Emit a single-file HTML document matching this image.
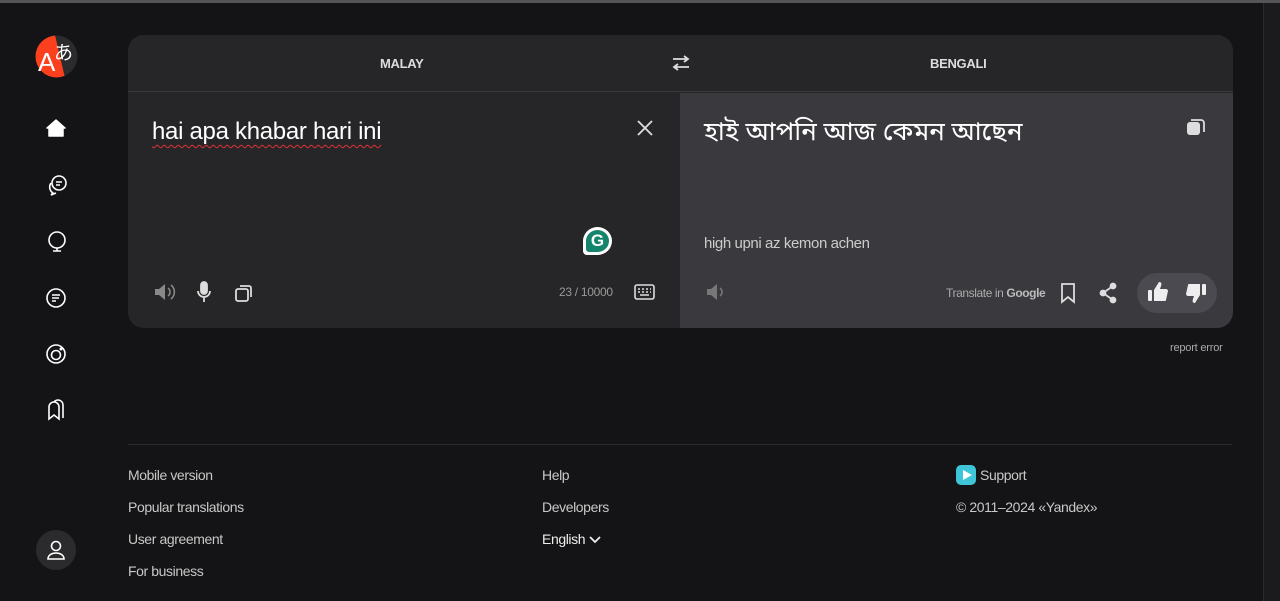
<!DOCTYPE html>
<html><head><meta charset="utf-8"><style>
*{margin:0;padding:0;box-sizing:border-box}
body{width:1280px;height:601px;background:#141416;font-family:"Liberation Sans","Noto Sans Bengali","Noto Sans CJK JP",sans-serif;color:#e6e6e6;position:relative;overflow:hidden}
.topline{position:absolute;left:0;top:0;width:1280px;height:3px;background:#555}
.scroll{position:absolute;right:0;top:3px;width:17px;height:598px;background:#1b1b1d;border-left:1px solid #2a2a2a}
.a{position:absolute}
.card{left:128px;top:35px;width:1105px;height:293px;border-radius:16px;background:#262628;overflow:hidden}
.hdr{left:0;top:0;width:1105px;height:57px;border-bottom:1px solid #3a3a3d;background:#262628}
.lp{left:0;top:58px;width:552px;height:235px;background:#262628}
.rp{left:552px;top:58px;width:553px;height:235px;background:#39393e}
.lang{font-size:13px;font-weight:bold;color:#ddd;top:21px;letter-spacing:-0.3px}
.foot{font-size:14px;color:#c8c8c8;letter-spacing:-0.4px}
</style></head><body>
<div class="topline"></div>
<div class="scroll"></div>
<svg class="a" style="left:35px;top:35px" width="43" height="43" viewBox="0 0 43 43">
<defs><clipPath id="c"><circle cx="21.5" cy="21.5" r="21"/></clipPath></defs>
<g clip-path="url(#c)"><rect width="43" height="43" fill="#2b2b2d"/><polygon points="0,0 20,0 30,43 0,43" fill="#fc3f1d"/></g>
<text x="3" y="36" font-size="26" fill="#fff" font-family="Liberation Sans">A</text>
<text x="19" y="24" font-size="19" fill="#fff" font-family="Noto Sans CJK JP">あ</text>
</svg>
<svg class="a" style="left:46px;top:118px" width="20" height="20" viewBox="0 0 20 20"><path d="M10 2 L19 10 L17 10 L17 18 L3 18 L3 10 L1 10Z" fill="#fff" stroke="#fff" stroke-linejoin="round" stroke-width="1.5"/></svg>
<svg class="a" style="left:45px;top:173px" width="24" height="24" viewBox="0 0 24 24" fill="none" stroke="#fff" stroke-width="1.6"><circle cx="14" cy="10" r="7"/><path d="M11 9h6M11 12h4"/><path d="M6 10a7 7 0 0 0 2 10l-2 2 5-2"/></svg>
<svg class="a" style="left:46px;top:230px" width="22" height="24" viewBox="0 0 22 24" fill="none" stroke="#fff" stroke-width="1.6"><circle cx="11" cy="10" r="8"/><path d="M11 18v3M7 21h8"/></svg>
<svg class="a" style="left:45px;top:287px" width="22" height="22" viewBox="0 0 22 22" fill="none" stroke="#fff" stroke-width="1.6"><rect x="2" y="2" width="18" height="18" rx="9"/><path d="M7 8h8M7 11h7M7 14h4"/></svg>
<svg class="a" style="left:45px;top:343px" width="22" height="22" viewBox="0 0 22 22" fill="none" stroke="#fff" stroke-width="1.6"><rect x="2" y="2" width="18" height="18" rx="9"/><circle cx="11" cy="12" r="4.5"/><circle cx="16" cy="6" r=".7" fill="#fff"/></svg>
<svg class="a" style="left:46px;top:399px" width="20" height="22" viewBox="0 0 20 22" fill="none" stroke="#fff" stroke-width="1.6"><path d="M3 20V8a5 5 0 0 1 10 0v12l-5-4z"/><path d="M8 3a5 5 0 0 1 9 3v13"/></svg>
<div class="a" style="left:36px;top:530px;width:40px;height:40px;border-radius:50%;background:#2b2b2e"></div>
<svg class="a" style="left:46px;top:539px" width="20" height="22" viewBox="0 0 20 22" fill="none" stroke="#fff" stroke-width="1.6"><circle cx="10" cy="7" r="4.5"/><path d="M2 20c0-4 4-6 8-6s8 2 8 6z"/></svg>

<div class="a card">
 <div class="a hdr"></div>
 <div class="a lang" style="left:252px">MALAY</div>
 <svg class="a" style="left:543px;top:20px" width="20" height="16" viewBox="0 0 20 16" fill="none" stroke="#ddd" stroke-width="1.8"><path d="M2 4h15M13 1l4 3-4 3M18 12H3M7 9l-4 3 4 3"/></svg>
 <div class="a lang" style="left:802px">BENGALI</div>
 <div class="a lp"></div>
 <div class="a rp"></div>
 <div class="a" style="left:24px;top:83px;font-size:24px;color:#fff;letter-spacing:-0.3px;text-decoration:underline wavy #d33;text-decoration-thickness:1px;text-underline-offset:5px">hai apa khabar hari ini</div>
 <svg class="a" style="left:508px;top:84px" width="18" height="18" viewBox="0 0 18 18" stroke="#ddd" stroke-width="1.8"><path d="M2 2l14 14M16 2L2 16"/></svg>
 <div class="a" style="left:455px;top:192px;width:29px;height:28px;border-radius:50% 50% 50% 4px;background:#fff"></div>
 <div class="a" style="left:458px;top:195px;width:23px;height:22px;border-radius:50% 50% 50% 3px;background:#15846c;color:#fff;font-size:17px;font-weight:bold;text-align:center;line-height:22px">G</div>
 <svg class="a" style="left:26px;top:247px" width="22" height="20" viewBox="0 0 22 20" fill="#888"><path d="M1 7h4l6-5v16l-6-5H1z"/><path d="M14 6a5 5 0 0 1 0 8M17 3a9 9 0 0 1 0 14" stroke="#888" stroke-width="1.6" fill="none"/></svg>
 <svg class="a" style="left:68px;top:246px" width="16" height="22" viewBox="0 0 16 22" fill="none" stroke="#ddd" stroke-width="1.8"><rect x="5" y="1" width="6" height="12" rx="3" fill="#ddd"/><path d="M2 10a6 6 0 0 0 12 0M8 16v5"/></svg>
 <svg class="a" style="left:106px;top:248px" width="20" height="20" viewBox="0 0 20 20" fill="none" stroke="#ddd" stroke-width="1.8"><rect x="2" y="6" width="12" height="12" rx="2"/><path d="M6 3h9a2 2 0 0 1 2 2v9"/></svg>
 <div class="a" style="left:431px;top:250px;font-size:12px;color:#999;letter-spacing:-0.3px">23 / 10000</div>
 <svg class="a" style="left:506px;top:249px" width="21" height="16" viewBox="0 0 21 16" fill="none" stroke="#ddd" stroke-width="1.6"><rect x="1" y="1" width="19" height="14" rx="2"/><path d="M4 5h2M8 5h2M12 5h2M16 5h1M4 8h2M8 8h2M12 8h2M16 8h1M6 11h9"/></svg>

 <div class="a" style="left:576px;top:81px;font-size:26px;color:#fff;font-family:'Noto Sans Bengali','Lohit Bengali','Noto Sans',sans-serif">হাই আপনি আজ কেমন আছেন</div>
 <svg class="a" style="left:1058px;top:83px" width="20" height="18" viewBox="0 0 20 18"><rect x="1" y="4" width="13" height="13" rx="3" fill="#ddd"/><path d="M5 2h10a3 3 0 0 1 3 3v9" stroke="#ddd" stroke-width="1.8" fill="none"/></svg>
 <div class="a" style="left:576px;top:200px;font-size:15px;color:#ccc;letter-spacing:-0.4px">high upni az kemon achen</div>
 <svg class="a" style="left:578px;top:247px" width="22" height="20" viewBox="0 0 22 20" fill="#777"><path d="M1 7h4l6-5v16l-6-5H1z"/><path d="M14 6a5 5 0 0 1 0 8" stroke="#777" stroke-width="1.6" fill="none"/></svg>
 <div class="a" style="left:818px;top:251px;font-size:12px;color:#aaa;letter-spacing:-0.4px">Translate in <b style="color:#bbb">Google</b></div>
 <svg class="a" style="left:932px;top:247px" width="16" height="22" viewBox="0 0 16 22" fill="none" stroke="#ddd" stroke-width="1.8"><path d="M2 2h12v18l-6-5-6 5z"/></svg>
 <svg class="a" style="left:970px;top:247px" width="20" height="22" viewBox="0 0 20 22" stroke="#ddd" stroke-width="1.8" fill="#ddd"><path d="M15 4L5 11l10 7" fill="none"/><circle cx="15" cy="4" r="2.5"/><circle cx="5" cy="11" r="2.5"/><circle cx="15" cy="18" r="2.5"/></svg>
 <div class="a" style="left:1009px;top:238px;width:80px;height:40px;border-radius:20px;background:#4a4a50"></div>
 <svg class="a" style="left:1019px;top:246px" width="22" height="22" viewBox="0 0 22 22" fill="#eee"><rect x="1" y="9" width="4" height="11" rx="1"/><path d="M7 9l5-8c2 0 3 1 2 4l-1 3h6c1 0 2 1 2 2l-2 9c0 1-1 1-2 1H7z"/></svg>
 <svg class="a" style="left:1057px;top:247px" width="22" height="22" viewBox="0 0 22 22" fill="#eee"><g transform="rotate(180 11 11)"><rect x="1" y="9" width="4" height="11" rx="1"/><path d="M7 9l5-8c2 0 3 1 2 4l-1 3h6c1 0 2 1 2 2l-2 9c0 1-1 1-2 1H7z"/></g></svg>
</div>
<div class="a" style="left:1170px;top:342px;font-size:11px;color:#aaa;letter-spacing:-0.2px">report error</div>
<div class="a" style="left:128px;top:444px;width:1104px;height:1px;background:#2c2c2f"></div>
<div class="a foot" style="left:128px;top:467px">Mobile version</div>
<div class="a foot" style="left:128px;top:499px">Popular translations</div>
<div class="a foot" style="left:128px;top:531px">User agreement</div>
<div class="a foot" style="left:128px;top:563px">For business</div>
<div class="a foot" style="left:542px;top:467px">Help</div>
<div class="a foot" style="left:542px;top:499px">Developers</div>
<div class="a foot" style="left:542px;top:531px;color:#eee">English <svg width="12" height="8" viewBox="0 0 12 8" fill="none" stroke="#eee" stroke-width="1.8"><path d="M1 1l5 5 5-5"/></svg></div>
<div class="a" style="left:956px;top:465px;width:20px;height:20px;border-radius:5px;background:#3ec6d8"></div>
<svg class="a" style="left:961px;top:469px" width="12" height="12" viewBox="0 0 12 12"><path d="M2 1l9 5-9 5z" fill="#fff"/></svg>
<div class="a foot" style="left:980px;top:467px">Support</div>
<div class="a foot" style="left:956px;top:499px">© 2011–2024 «Yandex»</div>
</body></html>
